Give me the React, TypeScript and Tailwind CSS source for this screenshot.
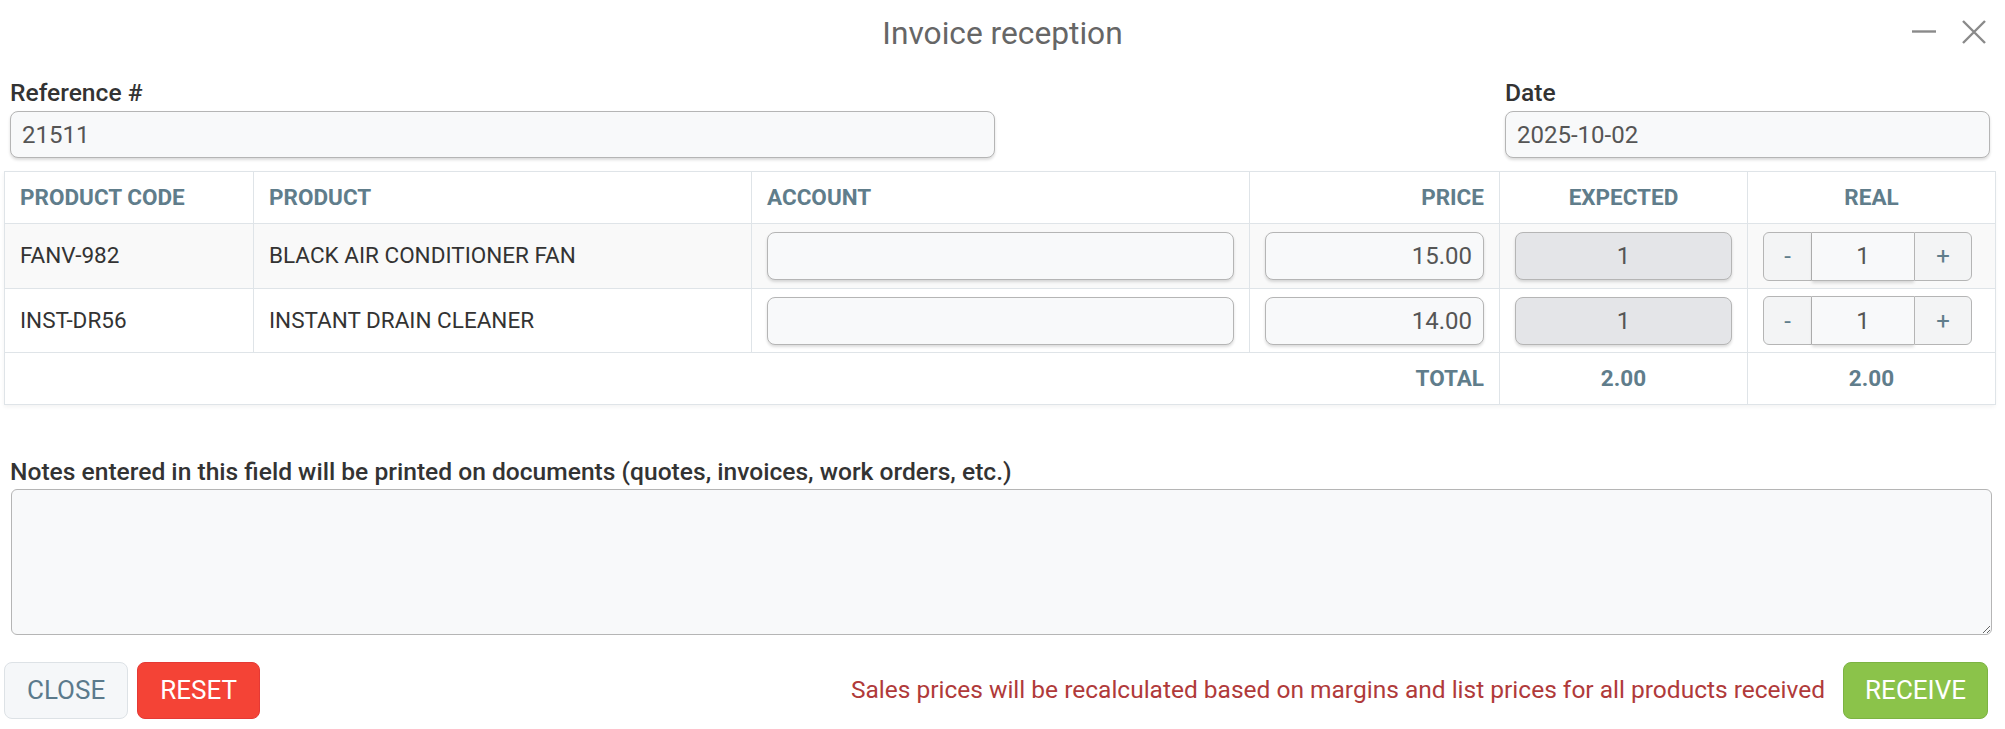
import React from 'react';

const rows = [
  { code: 'FANV-982', name: 'BLACK AIR CONDITIONER FAN', price: '15.00', expected: '1', real: '1' },
  { code: 'INST-DR56', name: 'INSTANT DRAIN CLEANER', price: '14.00', expected: '1', real: '1' },
];

const field =
  'h-[48px] w-full rounded-[8px] border border-[#b5b5b5] bg-[#f8f9fa] px-[11px] text-[24px] text-[#555] shadow-[0_2px_3px_rgba(0,0,0,0.14)] outline-none';

export default function App() {
  return (
    <div className="h-[729px] w-[2005px] bg-white font-['Roboto',sans-serif] text-[#333]">
      {/* Title bar */}
      <div className="relative flex h-[68px] items-center justify-center">
        <h1 className="text-[31.7px] leading-none text-[#666]">Invoice reception</h1>
        <div className="absolute right-[19px] top-[20px] flex items-center gap-[26px]">
          <svg width="24" height="24" viewBox="0 0 24 24">
            <line x1="0" y1="11.5" x2="24" y2="11.5" stroke="#8a8a8a" strokeWidth="2.4" />
          </svg>
          <svg width="24" height="24" viewBox="0 0 24 24">
            <path d="M1 1 L23 23 M23 1 L1 23" stroke="#8a8a8a" strokeWidth="2.4" fill="none" />
          </svg>
        </div>
      </div>

      {/* Reference / date */}
      <div className="flex justify-between pl-[10px] pr-[15px] pt-[13px]">
        <div className="w-[985px]">
          <label className="mb-[6px] block text-[24.6px] font-medium leading-6 text-[#333]">Reference #</label>
          <input readOnly defaultValue="21511" className={field.replace('h-[48px]', 'h-[47px]')} />
        </div>
        <div className="w-[485px]">
          <label className="mb-[6px] block text-[24.6px] font-medium leading-6 text-[#333]">Date</label>
          <input readOnly defaultValue="2025-10-02" className={field.replace('h-[48px]', 'h-[47px]')} />
        </div>
      </div>

      {/* Products table */}
      <div className="ml-[4px] mt-[13px] w-[1991px] shadow-[0_2px_4px_rgba(0,0,0,0.05)]">
        <table className="w-full table-fixed border-collapse text-[22.5px]">
          <colgroup>
            <col className="w-[249px]" />
            <col className="w-[498px]" />
            <col className="w-[498px]" />
            <col className="w-[250px]" />
            <col className="w-[248px]" />
            <col className="w-[248px]" />
          </colgroup>
          <thead>
            <tr className="h-[52px] font-bold text-[#607d8b]">
              <th className="border border-[#dfe4e8] px-[15px] text-left">PRODUCT CODE</th>
              <th className="border border-[#dfe4e8] px-[15px] text-left">PRODUCT</th>
              <th className="border border-[#dfe4e8] px-[15px] text-left">ACCOUNT</th>
              <th className="border border-[#dfe4e8] px-[15px] text-right">PRICE</th>
              <th className="border border-[#dfe4e8] px-[15px] text-center">EXPECTED</th>
              <th className="border border-[#dfe4e8] px-[15px] text-center">REAL</th>
            </tr>
          </thead>
          <tbody>
            {rows.map((r, i) => (
              <tr key={r.code} className={i === 0 ? 'h-[65px] bg-[#f9f9f9]' : 'h-[64px] bg-white'}>
                <td className="border border-[#dfe4e8] px-[15px]">{r.code}</td>
                <td className="border border-[#dfe4e8] px-[15px]">{r.name}</td>
                <td className="border border-[#dfe4e8] px-[15px]">
                  <input readOnly className={field} />
                </td>
                <td className="border border-[#dfe4e8] px-[15px]">
                  <input readOnly defaultValue={r.price} className={field + ' text-right'} />
                </td>
                <td className="border border-[#dfe4e8] px-[15px]">
                  <input
                    readOnly
                    defaultValue={r.expected}
                    className={field.replace('bg-[#f8f9fa]', 'bg-[#e4e5e8]') + ' text-center'}
                  />
                </td>
                <td className="border border-[#dfe4e8] px-[15px]">
                  <div className="flex h-[49px] w-[209px]">
                    <button className="w-[49px] rounded-l-[6px] border border-[#b5b5b5] bg-[#f3f4f5] text-[24px] text-[#607d8b]">
                      -
                    </button>
                    <input
                      readOnly
                      defaultValue={r.real}
                      className="w-[102px] border-y border-[#b5b5b5] bg-[#f8f9fa] text-center text-[24px] text-[#555] shadow-[0_2px_3px_rgba(0,0,0,0.14)] outline-none"
                    />
                    <button className="w-[58px] rounded-r-[6px] border border-[#b5b5b5] bg-[#f3f4f5] text-[24px] text-[#607d8b]">
                      +
                    </button>
                  </div>
                </td>
              </tr>
            ))}
            <tr className="h-[52px] bg-white font-bold text-[#607d8b]">
              <td colSpan={4} className="border border-[#dfe4e8] px-[15px] text-right">TOTAL</td>
              <td className="border border-[#dfe4e8] px-[15px] text-center">2.00</td>
              <td className="border border-[#dfe4e8] px-[15px] text-center">2.00</td>
            </tr>
          </tbody>
        </table>
      </div>

      {/* Notes */}
      <div className="mt-[55px] pl-[10px]">
        <label className="mb-[5px] block text-[24.6px] font-medium leading-6 text-[#333]">
          Notes entered in this field will be printed on documents (quotes, invoices, work orders, etc.)
        </label>
        <textarea className="ml-[1px] block h-[146px] w-[1981px] rounded-[6px] border border-[#b5b5b5] bg-[#f8f9fa] px-[11px] py-[8px] text-[24px] outline-none" />
      </div>

      {/* Footer */}
      <div className="mt-[27px] flex items-center pl-[4px] pr-[17px]">
        <button className="h-[57px] rounded-[8px] border border-[#dde2e6] bg-[#f5f7f9] px-[22px] text-[26px] text-[#5b7a8c]">
          CLOSE
        </button>
        <button className="ml-[9px] h-[57px] rounded-[8px] border border-[#e53935] bg-[#f44336] px-[22px] text-[26px] text-white">
          RESET
        </button>
        <div className="flex-1" />
        <span className="text-[24.5px] text-[#b03a3a]">
          Sales prices will be recalculated based on margins and list prices for all products received
        </span>
        <button className="ml-[18px] h-[57px] rounded-[8px] border border-[#7cb342] bg-[#8bc34a] px-[21px] text-[26px] text-white">
          RECEIVE
        </button>
      </div>
    </div>
  );
}
